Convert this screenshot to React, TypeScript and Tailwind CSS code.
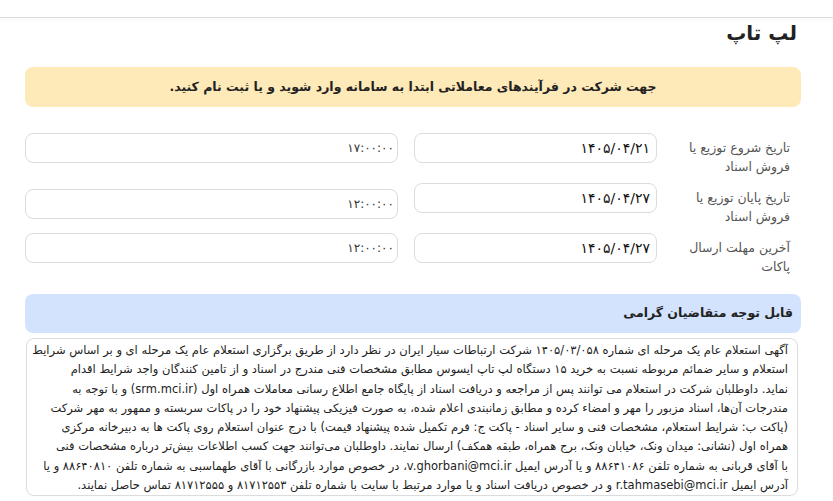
import React from "react";

const rows = [
  { label: ["تاریخ شروع توزیع یا", "فروش اسناد"], date: "۱۴۰۵/۰۴/۲۱", time: "۱۷:۰۰:۰۰", timeOffset: "mt-0" },
  { label: ["تاریخ پایان توزیع یا", "فروش اسناد"], date: "۱۴۰۵/۰۴/۲۷", time: "۱۲:۰۰:۰۰", timeOffset: "mt-[6px]" },
  { label: ["آخرین مهلت ارسال", "پاکات"], date: "۱۴۰۵/۰۴/۲۷", time: "۱۲:۰۰:۰۰", timeOffset: "mt-0" },
];

const notice = [
  "آگهی استعلام عام یک مرحله ای شماره ۱۴۰۵/۰۳/۰۵۸ شرکت ارتباطات سیار ایران در نظر دارد از طریق برگزاری استعلام عام یک مرحله ای و بر اساس شرایط",
  "استعلام و سایر ضمائم مربوطه نسبت به خرید ۱۵ دستگاه لپ تاپ ایسوس مطابق مشخصات فنی مندرج در اسناد و از تامین کنندگان واجد شرایط اقدام",
  "نماید. داوطلبان شرکت در استعلام می توانند پس از مراجعه و دریافت اسناد از پایگاه جامع اطلاع رسانی معاملات همراه اول (srm.mci.ir) و با توجه به",
  "مندرجات آن‌ها، اسناد مزبور را مهر و امضاء کرده و مطابق زمانبندی اعلام شده، به صورت فیزیکی پیشنهاد خود را در پاکات سربسته و ممهور به مهر شرکت",
  "(پاکت ب: شرایط استعلام، مشخصات فنی و سایر اسناد - پاکت ج: فرم تکمیل شده پیشنهاد قیمت) با درج عنوان استعلام روی پاکت ها به دبیرخانه مرکزی",
  "همراه اول (نشانی: میدان ونک، خیابان ونک، برج همراه، طبقه همکف) ارسال نمایند. داوطلبان می‌توانند جهت کسب اطلاعات بیش‌تر درباره مشخصات فنی",
  "با آقای قربانی به شماره تلفن ۸۸۶۴۱۰۸۶ و یا آدرس ایمیل v.ghorbani@mci.ir، در خصوص موارد بازرگانی با آقای طهماسبی به شماره تلفن ۸۸۶۴۰۸۱۰ و یا",
  "آدرس ایمیل r.tahmasebi@mci.ir و در خصوص دریافت اسناد و یا موارد مرتبط با سایت با شماره تلفن ۸۱۷۱۲۵۵۳ و ۸۱۷۱۲۵۵۵ تماس حاصل نمایند.",
];

export default function App() {
  return (
    <div dir="rtl" className="w-[833px] h-[501px] overflow-hidden bg-white text-[#212529]" style={{ fontFamily: '"DejaVu Sans", "Noto Sans", sans-serif' }}>
      {/* navbar edge */}
      <div className="h-[18px] border-b border-[#dddddd] shadow-[0_2px_4px_rgba(0,0,0,0.03)]" />

      <div className="mr-[32px] ml-[25px]">
        <h1 className="pr-[4px] pt-[1px] h-[49px] text-[20px] font-bold leading-[28px] text-[#222]">لپ تاپ</h1>

        <div className="h-[40px] rounded-lg bg-[#fee9b8] flex items-center justify-center text-[12.5px] font-bold text-[#222]">
          جهت شرکت در فرآیندهای معاملاتی ابتدا به سامانه وارد شوید و یا ثبت نام کنید.
        </div>

        <div className="mt-[26px] flex flex-col gap-[5px]">
          {rows.map((r, i) => (
            <div key={i} className="flex h-[45px] items-start">
              <div className="w-[144px] shrink-0 pr-[11px] pt-[5px] text-[12.5px] leading-[19px] text-[#555]">
                {r.label.map((l, j) => (
                  <div key={j}>{l}</div>
                ))}
              </div>
              <div className="w-[243px] h-[30px] shrink-0 rounded-lg border border-[#dcdcdc] flex items-center pr-[6px] text-[14px] text-[#111]">
                {r.date}
              </div>
              <div className={`mr-[16px] flex-1 h-[30px] rounded-lg border border-[#dcdcdc] flex items-center pr-[3px] text-[12px] text-[#333] ${r.timeOffset}`}>
                {r.time}
              </div>
            </div>
          ))}
        </div>

        <div className="mt-[16px] h-[39px] rounded-lg bg-[#d3e3fd] flex items-center pr-[8px] text-[12.5px] font-bold text-[#222]">
          قابل توجه متقاضیان گرامی
        </div>

        <div className="mt-[5px] ml-[1px] mr-[3px] h-[158px] rounded-lg border border-[#dcdcdc] pr-[9px] pt-[2px] text-[11.5px] leading-[19.3px] text-[#222]">
          {notice.map((line, i) => (
            <div key={i} className="whitespace-nowrap">{line}</div>
          ))}
        </div>
      </div>
    </div>
  );
}
